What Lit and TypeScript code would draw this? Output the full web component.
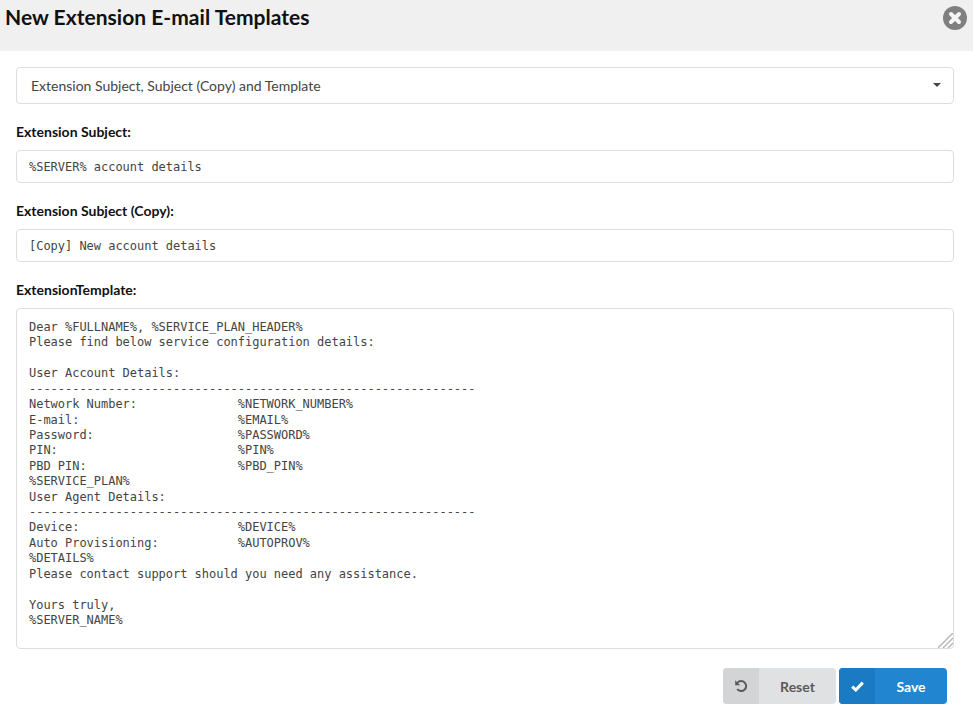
import { LitElement, html, css } from "lit";
import { customElement } from "lit/decorators.js";

const BODY = `Dear %FULLNAME%, %SERVICE_PLAN_HEADER%
Please find below service configuration details:

User Account Details:
--------------------------------------------------------------
Network Number:              %NETWORK_NUMBER%
E-mail:                      %EMAIL%
Password:                    %PASSWORD%
PIN:                         %PIN%
PBD PIN:                     %PBD_PIN%
%SERVICE_PLAN%
User Agent Details:
--------------------------------------------------------------
Device:                      %DEVICE%
Auto Provisioning:           %AUTOPROV%
%DETAILS%
Please contact support should you need any assistance.

Yours truly,
%SERVER_NAME%`;

@customElement("app-root")
export class AppRoot extends LitElement {
  static styles = css`
    :host {
      display: block;
      width: 973px;
      height: 710px;
      overflow: hidden;
      background: #fff;
      font-family: Lato, "Open Sans", sans-serif;
      color: #111;
    }
    * { box-sizing: border-box; }
    .header {
      height: 51px;
      background: #f0f0f0;
      display: flex;
      justify-content: space-between;
      align-items: flex-start;
      padding: 6px 6px 0 5px;
    }
    h1 {
      margin: -2px 0 0;
      font-size: 21px;
      line-height: 25px;
      font-weight: 700;
      letter-spacing: 0.03px;
      color: #111;
    }
    .close { display: block; }
    .content {
      padding: 16px 19px 0 16px;
      display: flex;
      flex-direction: column;
    }
    .select {
      height: 37px;
      border: 1px solid #dedede;
      border-radius: 4px;
      display: flex;
      align-items: center;
      justify-content: space-between;
      padding: 0 12px 2px 14px;
      font-size: 14px;
      color: #444;
      background: #fff;
    }
    .select span:first-child { margin-top: 2px; }
    .caret {
      width: 0; height: 0;
      border-left: 4px solid transparent;
      border-right: 4px solid transparent;
      border-top: 4px solid #444;
    }
    label {
      display: block;
      font-size: 14px;
      font-weight: 700;
      line-height: 18px;
      color: #111;
      margin: 19px 0 9px;
    }
    input, textarea {
      display: block;
      width: 100%;
      border: 1px solid #dedede;
      border-radius: 4px;
      font-family: "DejaVu Sans Mono", "Liberation Mono", monospace;
      font-size: 12px;
      letter-spacing: -0.024px;
      color: #444;
      background: #fff;
      outline: none;
      margin: 0;
    }
    input { height: 33px; padding: 0 12px; }
    .area { position: relative; height: 341px; }
    textarea {
      height: 100%;
      padding: 11px 12px;
      line-height: 15.42px;
      white-space: pre;
      overflow: hidden;
      resize: none;
    }
    .grip { position: absolute; right: 1px; bottom: 1px; display: block; }
    .actions {
      display: flex;
      justify-content: flex-end;
      gap: 3px;
      padding: 19px 7px 0 0;
    }
    .btn {
      height: 36px;
      border: 0;
      border-radius: 4px;
      padding: 0;
      display: flex;
      align-items: stretch;
      overflow: hidden;
      font-family: inherit;
      font-size: 14px;
      font-weight: 700;
    }
    .ico { width: 36px; display: flex; align-items: center; justify-content: center; }
    .lbl { flex: 1; display: flex; align-items: center; justify-content: center; }
    .reset { width: 113px; background: #e0e1e2; color: #5a5a5a; }
    .reset .ico { background: #d3d4d5; }
    .save { width: 108px; background: #2185d0; color: #fff; }
    .save .ico { background: #1a7bc4; }
  `;

  render() {
    return html`
      <div class="header">
        <h1>New Extension E-mail Templates</h1>
        <svg class="close" width="24" height="24" viewBox="0 0 24 24">
          <circle cx="12" cy="12" r="12" fill="#7f7f7f"></circle>
          <path d="M8 8L16 16M16 8L8 16" stroke="#f6f6f6" stroke-width="4" stroke-linecap="round"></path>
        </svg>
      </div>
      <div class="content">
        <div class="select">
          <span>Extension Subject, Subject (Copy) and Template</span>
          <span class="caret"></span>
        </div>
        <label>Extension Subject:</label>
        <input .value=${"%SERVER% account details"} />
        <label>Extension Subject (Copy):</label>
        <input .value=${"[Copy] New account details"} />
        <label>ExtensionTemplate:</label>
        <div class="area">
          <textarea .value=${BODY} spellcheck="false"></textarea>
          <svg class="grip" width="15" height="15" viewBox="0 0 15 15" stroke="#b4b4b4" stroke-width="1.4" fill="none">
            <path d="M0 15L15 0M5 15L15 5M10 15L15 10"></path>
          </svg>
        </div>
        <div class="actions">
          <button class="btn reset">
            <span class="ico">
              <svg width="14" height="14" viewBox="0 0 14 14" fill="none">
                <path d="M3.4 3.8A5 5 0 1 1 3.2 10.2" stroke="#5a5a5a" stroke-width="2"></path>
                <path d="M1.2 1.2V6.2H6.2Z" fill="#5a5a5a"></path>
              </svg>
            </span>
            <span class="lbl">Reset</span>
          </button>
          <button class="btn save">
            <span class="ico">
              <svg width="13" height="11" viewBox="0 0 13 11" fill="none" stroke="#fff" stroke-width="3">
                <path d="M1.2 5.6L4.8 9L11.8 1.6"></path>
              </svg>
            </span>
            <span class="lbl">Save</span>
          </button>
        </div>
      </div>
    `;
  }
}
